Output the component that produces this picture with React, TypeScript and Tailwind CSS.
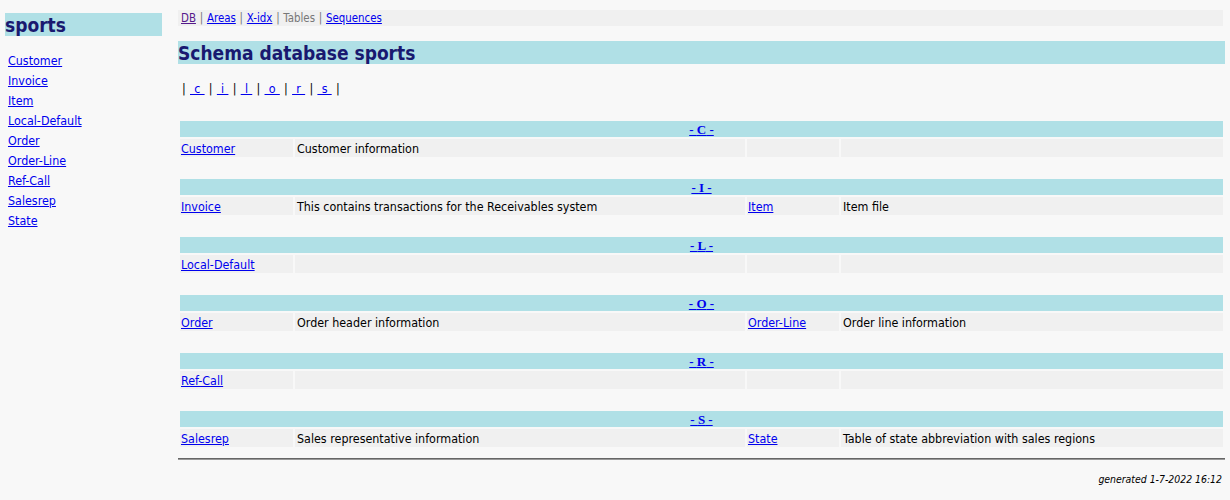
const font = "font-['DejaVu_Sans_Condensed','DejaVu_Sans',sans-serif] [font-stretch:condensed]"

const TABLES = ['Customer', 'Invoice', 'Item', 'Local-Default', 'Order', 'Order-Line', 'Ref-Call', 'Salesrep', 'State']

type Entry = { name: string; desc: string }

const GROUPS: { letter: string; rows: (Entry | null)[] }[] = [
  { letter: 'C', rows: [{ name: 'Customer', desc: 'Customer information' }, null] },
  {
    letter: 'I',
    rows: [
      { name: 'Invoice', desc: 'This contains transactions for the Receivables system' },
      { name: 'Item', desc: 'Item file' },
    ],
  },
  { letter: 'L', rows: [{ name: 'Local-Default', desc: '' }, null] },
  {
    letter: 'O',
    rows: [
      { name: 'Order', desc: 'Order header information' },
      { name: 'Order-Line', desc: 'Order line information' },
    ],
  },
  { letter: 'R', rows: [{ name: 'Ref-Call', desc: '' }, null] },
  {
    letter: 'S',
    rows: [
      { name: 'Salesrep', desc: 'Sales representative information' },
      { name: 'State', desc: 'Table of state abbreviation with sales regions' },
    ],
  },
]

const link = 'text-[#0000ee] underline'

export default function App() {
  return (
    <div className={`min-h-[500px] bg-[#f8f8f8] text-[12.4px] text-black ${font}`}>
      <div className="flex">
        {/* left index */}
        <div className="w-[162px] pl-[5px] pt-[13px] shrink-0">
          <div className="h-[23px] bg-[#b0e0e6] text-[19px] font-bold leading-[24px] text-[#191970]">sports</div>
          <ul className="mt-[15px] pl-[3px]">
            {TABLES.map((t) => (
              <li key={t} className="h-[20px] leading-[20px]">
                <a href="#" className={link}>{t}</a>
              </li>
            ))}
          </ul>
        </div>

        {/* main */}
        <div className="ml-[16px] mr-[5px] flex-1 pt-[10px]">
          <div className="mr-[2px] h-[16px] bg-[#f0f0f0] pl-[3px] text-[11.4px] leading-[17px] text-[#777] [word-spacing:0.5px]">
            <a href="#" className="text-[#551a8b] underline">DB</a> |{' '}
            <a href="#" className={link}>Areas</a> |{' '}
            <a href="#" className={link}>X-idx</a> | Tables |{' '}
            <a href="#" className={link}>Sequences</a>
          </div>

          <h1 className="mt-[15px] h-[23px] bg-[#b0e0e6] text-[19px] font-bold leading-[24px] text-[#191970]">
            Schema database sports
          </h1>

          <div className="mt-[16px] h-[16px] pl-[4px] leading-[18px] whitespace-pre [word-spacing:0.7px]">
            {'| '}
            {['c', 'i', 'l', 'o', 'r', 's'].map((l) => (
              <span key={l}>
                <a href="#" className={link}>{` ${l} `}</a>
                {' | '}
              </span>
            ))}
          </div>

          <div className="mt-[23px] flex flex-col gap-[22px] px-[2px] pt-[2px]">
            {GROUPS.map((g) => (
              <div key={g.letter} className="grid grid-cols-[113px_450px_92px_1fr] gap-[2px]">
                <div className="col-span-4 h-[16px] bg-[#b0e0e6] text-center font-['Liberation_Serif',serif] text-[13px] font-bold leading-[17px]">
                  <a href="#" className={link}>- {g.letter} -</a>
                </div>
                {g.rows.map((r, i) => (
                  <Cells key={i} entry={r} />
                ))}
              </div>
            ))}
          </div>

          <div className="mt-[11px] h-[2px] border-t border-t-[#666] border-b border-b-[#999]" />

          <div className="mt-[12px] pr-[3px] text-right text-[10.4px] italic">generated 1-7-2022 16:12</div>
        </div>
      </div>
    </div>
  )
}

function Cells({ entry }: { entry: Entry | null }) {
  return (
    <>
      <div className="h-[18px] bg-[#f0f0f0] pl-[1px] leading-[19px]">
        {entry && <a href="#" className={link}>{entry.name}</a>}
      </div>
      <div className="h-[18px] bg-[#f0f0f0] pl-[2px] leading-[19px]">{entry?.desc}</div>
    </>
  )
}
